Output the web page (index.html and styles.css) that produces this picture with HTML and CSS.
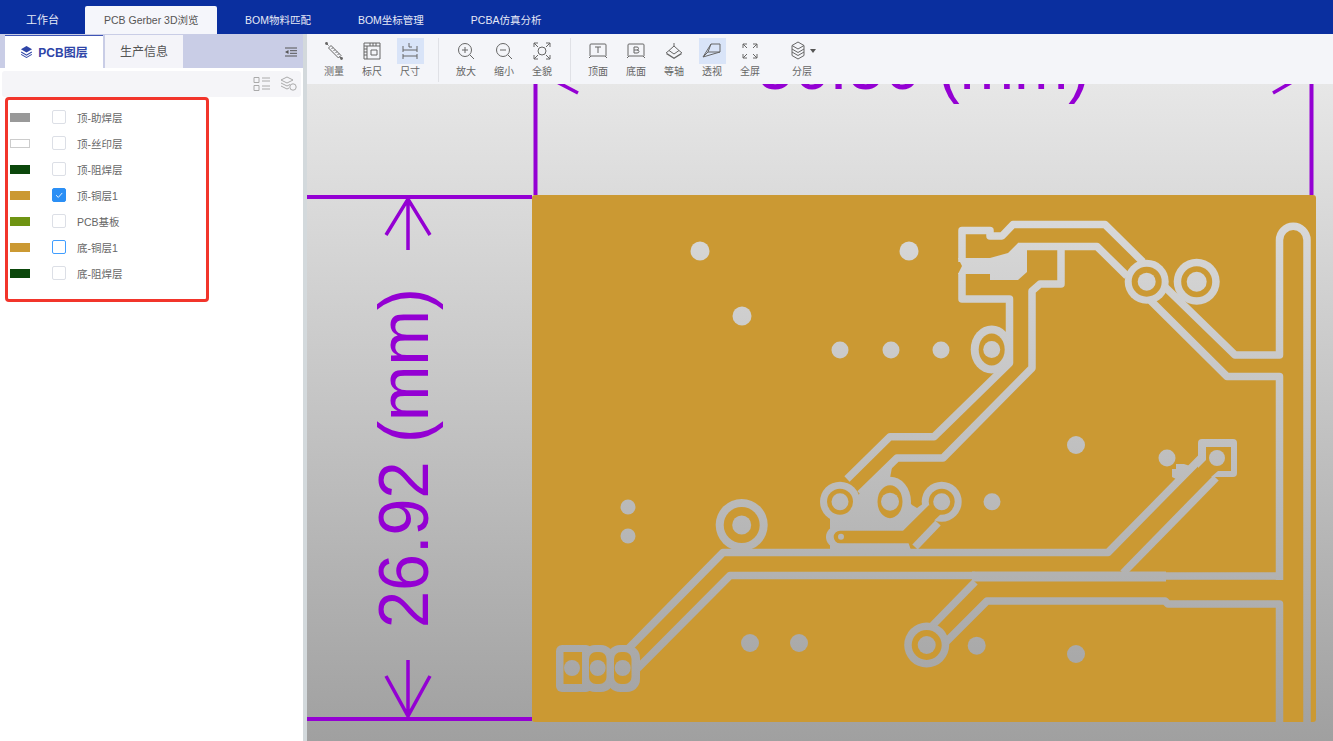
FILE: index.html
```html
<!DOCTYPE html>
<html lang="zh-CN">
<head>
    <meta charset="UTF-8">
    <title>PCB Gerber 3D浏览</title>
    <link rel="stylesheet" href="styles.css">
</head>
<body>
<div class="app">
    <div class="topbar">
        <a class="nav first">工作台</a>
        <a class="nav on">PCB Gerber 3D浏览</a>
        <a class="nav">BOM物料匹配</a>
        <a class="nav">BOM坐标管理</a>
        <a class="nav">PCBA仿真分析</a>
    </div>
    <div class="main">
        <div class="side">
            <div class="side-tabs">
                <a class="side-tab on">
                    <svg class="tab-ico" viewBox="0 0 14 14"><path d="M7 1 13 4.5 7 8 1 4.5Z"/><path d="M1.5 7 7 10.2 12.5 7 13 8 7 11.5 1 8Z"/><path d="M1.5 9.7 7 12.8 12.5 9.7 13 10.6 7 14 1 10.6Z"/></svg>
                    PCB图层
                </a>
                <a class="side-tab">生产信息</a>
                <svg class="collapse" viewBox="0 0 12 10"><path d="M0 1h12M5 3.7h7M5 6.3h7M0 9h12"/><path class="fill" d="M3.5 3 0 5 3.5 7Z"/></svg>
            </div>
            <div class="side-tools">
                <svg class="side-ico" viewBox="0 0 18 16"><path d="M1 1.5h5v5H1zM1 9.5h5v5H1zM9 2h8M9 5h8M9 10h8M9 13h8"/></svg>
                <svg class="side-ico" viewBox="0 0 18 16"><path d="M8 1 14 4 8 7 2 4ZM2 7l6 3 3-1.5M2 10l6 3 2-1"/><circle cx="14" cy="11" r="3.2"/></svg>
            </div>
            <ul class="layers">
                <li class="layer"><i class="swatch sw-paste"></i><i class="check"></i><span>顶-助焊层</span></li>
                <li class="layer"><i class="swatch sw-silk"></i><i class="check"></i><span>顶-丝印层</span></li>
                <li class="layer"><i class="swatch sw-mask"></i><i class="check"></i><span>顶-阻焊层</span></li>
                <li class="layer"><i class="swatch sw-copper"></i><i class="check checked"><svg viewBox="0 0 14 14"><path d="M3.5 7.2 6.2 9.8 10.8 4.6"/></svg></i><span>顶-铜层1</span></li>
                <li class="layer"><i class="swatch sw-board"></i><i class="check"></i><span>PCB基板</span></li>
                <li class="layer"><i class="swatch sw-copper"></i><i class="check focus"></i><span>底-铜层1</span></li>
                <li class="layer"><i class="swatch sw-mask"></i><i class="check"></i><span>底-阻焊层</span></li>
            </ul>
            <div class="red-box"></div>
        </div>
        <div class="work">
            <div class="tools">
                <div class="tool-group">
                    <a class="tool"><b class="tile"><svg viewBox="0 0 20 20"><path d="M7 4.5 17 14.5 14.5 17 4.5 7ZM9 6.5 7.5 8M11 8.5 9.5 10M13 10.5 11.500 12M15 12.5 13.5 14M3 3l1.5 1.5M15.5 15.5 17 17"/><circle class="dot" cx="2.5" cy="2.5" r="1.4"/><circle class="dot" cx="17.5" cy="17.5" r="1.4"/></svg></b><span>测量</span></a>
                    <a class="tool"><b class="tile"><svg viewBox="0 0 20 20"><path d="M2 2h16v16H2zM2 5h16M5 5v13M8 2v3M11 2v3M14 2v3M2 8h3M2 11h3M2 14h3"/><path d="M9 9h6v5H9z"/></svg></b><span>标尺</span></a>
                    <a class="tool"><b class="tile active"><svg viewBox="0 0 20 20"><path d="M3 5v6M17 5v6M3 9h14M3 15h14M3 13v5M17 13v5M9 2v4h3"/></svg></b><span>尺寸</span></a>
                </div>
                <div class="tool-group">
                    <a class="tool"><b class="tile"><svg viewBox="0 0 20 20"><circle cx="9" cy="9" r="6.5"/><path d="M14 14l4 4M6 9h6M9 6v6"/></svg></b><span>放大</span></a>
                    <a class="tool"><b class="tile"><svg viewBox="0 0 20 20"><circle cx="9" cy="9" r="6.5"/><path d="M14 14l4 4M6 9h6"/></svg></b><span>缩小</span></a>
                    <a class="tool"><b class="tile"><svg viewBox="0 0 20 20"><circle cx="10" cy="10" r="4"/><path d="M2 6V2h4M14 2h4v4M2 14v4h4M18 14v4h-4M2 2l4 4M18 2l-4 4M2 18l4-4M18 18l-4-4"/></svg></b><span>全貌</span></a>
                </div>
                <div class="tool-group">
                    <a class="tool"><b class="tile"><svg viewBox="0 0 20 20"><path d="M2 15V4q0-1 1-1h14q1 0 1 1v11M1 17l2-2h14l2 2M7 6h6M10 6v6"/></svg></b><span>顶面</span></a>
                    <a class="tool"><b class="tile"><svg viewBox="0 0 20 20"><path d="M2 15V4q0-1 1-1h14q1 0 1 1v11M1 17l2-2h14l2 2M8 6h3q1.5 0 1.5 1.5T11 9H8M11 9q2 0 2 1.5T11 12H8V6"/></svg></b><span>底面</span></a>
                    <a class="tool"><b class="tile"><svg viewBox="0 0 20 20"><path d="M10 5 15 9.5 10 13 5 9.5ZM10 2v3M2 12l3-2.5M18 12l-3-2.5"/><path class="solid" d="M3 12l7 4.5 7-4.5 1 1-8 5-8-5Z"/></svg></b><span>等轴</span></a>
                    <a class="tool"><b class="tile active"><svg viewBox="0 0 20 20"><path d="M9 3h9v8H6ZM1 16 6 11M1 16 9 3M1 16 18 11"/></svg></b><span>透视</span></a>
                    <a class="tool"><b class="tile"><svg viewBox="0 0 20 20"><path d="M3 7V3h4M13 3h4v4M3 13v4h4M17 13v4h-4M3 3l4 4M17 3l-4 4M3 17l4-4M17 17l-4-4"/></svg></b><span>全屏</span></a>
                </div>
                <a class="tool split"><b class="tile wide"><svg viewBox="0 0 20 20"><path d="M10 1 16 4.5 10 8 4 4.5ZM4 8l6 3.5L16 8M4 11l6 3.5 6-3.5M4 14.5 10 18 16 14.5M4 4.5v10M16 4.500v10"/></svg><em class="caret"></em></b><span>分层</span></a>
            </div>
            <div class="view">
                <svg class="board" viewBox="307 84 1026 657" width="1026" height="657">
                    <defs>
                        <mask id="copper" maskUnits="userSpaceOnUse" x="307" y="84" width="1026" height="657">
                            <rect class="keep" x="532" y="195" width="784" height="527" rx="3"/>

                            <!-- tracks -->
                            <path class="cut" d="M962 262V230.5H990V236H1002L1013 224.5H1105L1143 262"/>
                            <path class="cut" d="M1163 285 1235 355H1279.5V240A13.75 13.75 0 0 1 1307 240V722"/>
                            <path class="cut" d="M1018 246.5H1097L1127 276"/>
                            <path class="cut" d="M1150 300 1227 376.5H1279.5V580"/>
                            <path class="cut" d="M962 273V299H1009.5V363L934 436.7H890L847 479"/>
                            <path class="cut" d="M1061 247V284H1040L1032 291V368L943 458H897L860 494"/>
                            <path class="cut" d="M627 650 723 552.5H1108L1201 458"/>
                            <path class="cut" d="M636 670 730 575.5H975"/>
                            <path class="cut wide" d="M972 576.5H1166"/>
                            <path class="cut" d="M1166 576H1283"/>
                            <path class="cut" d="M1123 573 1216 478"/>
                            <path class="cut" d="M945 643 987 601H1165L1168 604H1279.5V722"/>
                            <path class="cut" d="M975 582 931 627"/>
                            <path class="cut" d="M938 523 915 547"/>
                            <path class="void" d="M1172 477V469H1176V464H1184L1190 466 1178 480Z"/>
                            <path class="void" d="M948 638 958 628V634H952L945 642Z"/>

                            <!-- connector at the top edge -->
                            <path class="void" d="M958 258H990L1008 253 1018 243H1027V272L1018 280H990V274H958L962 266Z"/>

                            <!-- pads with clearance -->
                            <circle class="void" cx="1146.7" cy="281.7" r="22"/>
                            <circle class="keep" cx="1146.7" cy="281.7" r="15"/>
                            <circle class="void" cx="1196.7" cy="281.7" r="23"/>
                            <circle class="keep" cx="1196.7" cy="281.7" r="15.5"/>
                            <ellipse class="void" cx="991.7" cy="349.5" rx="21" ry="24"/>
                            <ellipse class="keep" cx="991.7" cy="349.5" rx="13" ry="16"/>
                            <circle class="void" cx="741.7" cy="525" r="26"/>
                            <circle class="keep" cx="741.7" cy="525" r="18"/>
                            <rect class="void" x="1198" y="439" width="39" height="38" rx="4"/>
                            <path class="keep" d="M1206 447H1231V471H1218L1197 489 1186 480 1206 460Z"/>

                            <!-- pad cluster in the middle -->
                            <path class="void" d="M853 500 893 462 890 478 912 505 917 508 924 503 932 508 905 533 912 553H830V505Z"/>
                            <circle class="void" cx="840" cy="501.7" r="20"/>
                            <ellipse class="void" cx="890" cy="501.7" rx="21" ry="25"/>
                            <circle class="void" cx="941.7" cy="501.7" r="20"/>
                            <circle class="void" cx="837" cy="537" r="11"/>
                            <circle class="keep" cx="840" cy="501.7" r="13"/>
                            <ellipse class="keep" cx="890" cy="501.7" rx="12.5" ry="16.5"/>
                            <circle class="keep" cx="941.7" cy="501.7" r="13"/>
                            <path class="keep" d="M840 530.7H903L929 505 941 514 910 543.3H840A6.3 6.3 0 0 1 840 530.7Z"/>
                            <circle class="void" cx="841" cy="536.7" r="3"/>

                            <!-- header pads on the lower left -->
                            <rect class="void" x="556" y="645" width="36" height="47" rx="6"/>
                            <rect class="void" x="582" y="645" width="32" height="47" rx="13"/>
                            <rect class="void" x="607" y="645" width="33" height="47" rx="13"/>
                            <rect class="keep" x="563.5" y="652" width="18.5" height="32"/>
                            <rect class="keep" x="589" y="652" width="17.5" height="32" rx="7"/>
                            <rect class="keep" x="614" y="652" width="17.5" height="32" rx="7"/>

                            <!-- ring around the pad at the bottom -->
                            <circle class="void" cx="926.7" cy="645" r="22.5"/>
                            <circle class="keep" cx="926.7" cy="645" r="15"/>

                            <!-- drill holes -->
                            <circle class="void" cx="1146.7" cy="281.7" r="9"/>
                            <circle class="void" cx="1196.7" cy="281.7" r="10"/>
                            <circle class="void" cx="991.7" cy="349.5" r="8.5"/>
                            <circle class="void" cx="741.7" cy="525" r="9.5"/>
                            <circle class="void" cx="1217" cy="458" r="8"/>
                            <circle class="void" cx="840" cy="501.7" r="8.5"/>
                            <circle class="void" cx="890" cy="501.7" r="9"/>
                            <circle class="void" cx="941.7" cy="501.7" r="8.5"/>
                            <circle class="void" cx="572" cy="668" r="8"/>
                            <circle class="void" cx="597.7" cy="668" r="8"/>
                            <circle class="void" cx="622.7" cy="668" r="8"/>
                            <circle class="void" cx="926.7" cy="645" r="9"/>
                            <circle class="void" cx="700" cy="251" r="9.5"/>
                            <circle class="void" cx="909" cy="251" r="9.5"/>
                            <circle class="void" cx="742" cy="316" r="9.5"/>
                            <circle class="void" cx="840" cy="350" r="8.5"/>
                            <circle class="void" cx="891" cy="350" r="8.5"/>
                            <circle class="void" cx="941" cy="350" r="8.5"/>
                            <circle class="void" cx="1076" cy="445" r="9"/>
                            <circle class="void" cx="1167" cy="458" r="8.5"/>
                            <circle class="void" cx="992" cy="501.7" r="8.5"/>
                            <circle class="void" cx="628" cy="507" r="7.5"/>
                            <circle class="void" cx="628" cy="536" r="7.5"/>
                            <circle class="void" cx="750" cy="643" r="9"/>
                            <circle class="void" cx="799" cy="643" r="9"/>
                            <circle class="void" cx="976.7" cy="645.7" r="9"/>
                            <circle class="void" cx="1076" cy="654" r="9"/>
                        </mask>
                    </defs>

                    <rect class="plate" x="532" y="195" width="784" height="527" mask="url(#copper)"/>

                    <!-- dimension lines -->
                    <path class="dim" d="M307 197H532M307 719H532M535.5 84V195M1311.5 84V195"/>
                    <path class="dim thin" d="M408 199V250M386 235 408 199 430 235M408 660V716M386 676 408 716 430 676"/>
                    <path class="dim thin" d="M536 71 578 93M1311 71 1273 93"/>
                    <text class="dim-text" x="757" y="89" textLength="333" lengthAdjust="spacingAndGlyphs">36.36 (mm)</text>
                    <text class="dim-text" transform="translate(427.5 628) rotate(-90)" textLength="340" lengthAdjust="spacingAndGlyphs">26.92 (mm)</text>
                </svg>
            </div>
        </div>
    </div>
</div>
</body>
</html>
```

FILE: styles.css
```css
* {
    margin: 0;
    padding: 0;
    box-sizing: border-box;
}

html, body {
    height: 741px;
    overflow: hidden;
}

body {
    font-family: "Liberation Sans", "Noto Sans CJK SC", sans-serif;
    background: #fff;
}

.app {
    display: flex;
    flex-direction: column;
    height: 741px;
}

/* top navigation */
.topbar {
    display: flex;
    align-items: flex-end;
    flex: none;
    height: 34px;
    padding-left: 7px;
    gap: 7px;
    background: #0a2f9f;
}

.nav {
    display: flex;
    align-items: center;
    height: 28px;
    padding: 0 19px 2px;
    font-size: 10.5px;
    color: #e6e9f6;
}

.nav.first {
    font-size: 11px;
}

.nav.on {
    width: 132px;
    background: #f5f6fb;
    color: #555;
    border-radius: 2px 2px 0 0;
    white-space: nowrap;
}

.nav:nth-child(n+3) {
    margin-left: 2px;
}

.main {
    display: flex;
    flex: 1;
    min-height: 0;
}

/* layer panel */
.side {
    position: relative;
    flex: none;
    width: 307px;
    background: #fff;
    border-right: 4px solid #d3d9dc;
}

.side-tabs {
    display: flex;
    align-items: flex-end;
    height: 34px;
    padding-left: 5px;
    gap: 2px;
    background: #c9cde6;
}

.side-tab {
    display: flex;
    align-items: center;
    justify-content: center;
    gap: 5px;
    width: 78px;
    height: 33px;
    padding-bottom: 2px;
    font-size: 12px;
    color: #555;
    background: #f4f4f9;
}

.side-tab.on {
    width: 98px;
    font-weight: bold;
    color: #2f45a8;
    background: #fff;
    border-top: 1px solid #3f55b5;
}

.tab-ico {
    width: 13px;
    height: 13px;
    fill: #2f45a8;
}

.collapse {
    width: 12px;
    height: 10px;
    margin: 0 6px 11px auto;
    fill: none;
    stroke: #555;
}

.collapse .fill {
    fill: #555;
    stroke: none;
}

.side-tools {
    display: flex;
    justify-content: flex-end;
    align-items: center;
    gap: 8px;
    height: 26px;
    margin: 3px 2px 0;
    padding-right: 4px;
    background: #f5f5f8;
    border-radius: 3px;
}

.side-ico {
    width: 18px;
    height: 16px;
    fill: none;
    stroke: #aaa;
}

.layers {
    list-style: none;
    padding: 7px 0 0 10px;
}

.layer {
    display: flex;
    align-items: center;
    height: 26px;
    font-size: 10.5px;
    color: #666;
}

.swatch {
    flex: none;
    width: 20px;
    height: 9px;
    margin-right: 22px;
}

.sw-paste { background: #999; }
.sw-silk { background: #fff; border: 1px solid #ccc; }
.sw-mask { background: #0b470b; }
.sw-copper { background: #cb9933; }
.sw-board { background: #6f9413; }

.check {
    flex: none;
    width: 14px;
    height: 14px;
    margin-right: 11px;
    background: #fff;
    border: 1px solid #dcdfe6;
    border-radius: 2px;
}

.check.checked {
    background: #2b8ff5;
    border-color: #2b8ff5;
}

.check.checked svg {
    display: block;
    width: 12px;
    height: 12px;
    fill: none;
    stroke: #fff;
}

.check.focus {
    border-color: #409eff;
}

.red-box {
    position: absolute;
    left: 5px;
    top: 63px;
    width: 204px;
    height: 205px;
    border: 3px solid #f2352b;
    border-radius: 4px;
}

/* toolbar */
.work {
    display: flex;
    flex-direction: column;
    flex: 1;
    min-width: 0;
}

.tools {
    display: flex;
    flex: none;
    height: 50px;
    padding-left: 8px;
    background: #f4f5f9;
}

.tool-group {
    display: flex;
    height: 44px;
    margin-top: 4px;
    margin-right: 8px;
    padding-right: 9px;
    border-right: 1px solid #e0e1e6;
}

.tool-group:nth-child(3) {
    margin-right: 14px;
    padding-right: 0;
    border-right: 0;
}

.tool {
    display: flex;
    flex-direction: column;
    align-items: center;
    width: 38px;
    font-size: 10px;
    line-height: 14px;
    color: #666;
}

.tool span {
    margin-top: 1px;
}

.tool.split {
    margin-top: 4px;
}

.tile {
    display: flex;
    align-items: center;
    justify-content: center;
    width: 27px;
    height: 26px;
}

.tile.active {
    background: #d9e4f8;
}

.tile svg {
    width: 20px;
    height: 20px;
    fill: none;
    stroke: #666;
    stroke-width: 1;
}

.tile svg .dot,
.tile svg .solid {
    fill: #666;
    stroke: none;
}

.tile.wide {
    width: 38px;
}

.caret {
    width: 0;
    height: 0;
    margin-left: 2px;
    border: 3.5px solid transparent;
    border-top: 4px solid #555;
    border-bottom: 0;
}

/* board view */
.view {
    flex: 1;
    min-height: 0;
    background: linear-gradient(#e7e7e7, #a0a0a0);
    overflow: hidden;
}

.board {
    display: block;
}

.keep {
    fill: #fff;
}

.void {
    fill: #000;
}

.cut {
    fill: none;
    stroke: #000;
    stroke-width: 7.5;
    stroke-linejoin: round;
}

.cut.wide {
    stroke-width: 10;
}

.plate {
    fill: #cb9933;
}

.dim {
    fill: none;
    stroke: #9400d3;
    stroke-width: 4;
}

.dim.thin {
    stroke-width: 3.5;
}

.dim-text {
    font-family: "Liberation Sans", sans-serif;
    font-size: 70px;
    fill: #9400d3;
}
```
